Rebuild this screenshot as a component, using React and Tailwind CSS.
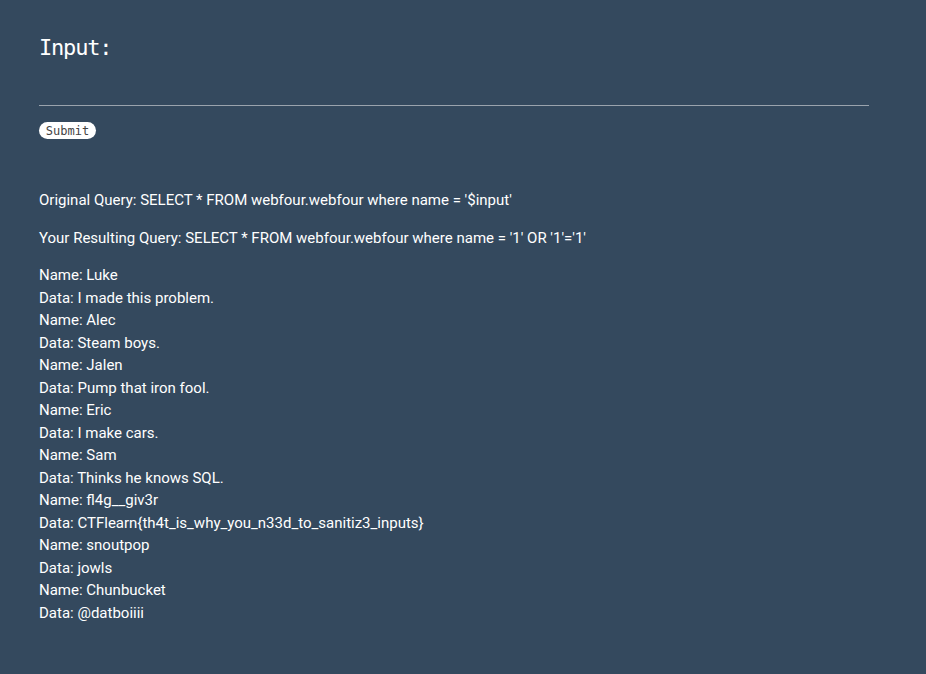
export default function App() {
  const rows = [
    ["Name", "Luke"], ["Data", "I made this problem."],
    ["Name", "Alec"], ["Data", "Steam boys."],
    ["Name", "Jalen"], ["Data", "Pump that iron fool."],
    ["Name", "Eric"], ["Data", "I make cars."],
    ["Name", "Sam"], ["Data", "Thinks he knows SQL."],
    ["Name", "fl4g__giv3r"], ["Data", "CTFlearn{th4t_is_why_you_n33d_to_sanitiz3_inputs}"],
    ["Name", "snoutpop"], ["Data", "jowls"],
    ["Name", "Chunbucket"], ["Data", "@datboiiii"],
  ];
  return (
    <div className="min-h-[674px] w-full bg-[#34495e] text-white pl-[39px] pr-[57px] pt-[34px]" style={{ fontFamily: "Roboto, sans-serif" }}>
      <div className="text-[22px] leading-[28px] tracking-[-1.2px] text-white" style={{ fontFamily: '"DejaVu Sans Mono", monospace' }}>Input:</div>
      <div className="mt-[43px] h-px bg-[#9aa3ad]" />
      <div className="mt-[16px] flex">
        <span className="flex h-[17px] w-[57px] items-center justify-center rounded-full bg-white text-[12px] text-[#444]" style={{ fontFamily: '"DejaVu Sans Mono", monospace' }}>Submit</span>
      </div>
      <div className="mt-[50px] text-[15px] leading-[22.5px]">
        <p>Original Query: SELECT * FROM webfour.webfour where name = '$input'</p>
        <p className="mt-[15px]">Your Resulting Query: SELECT * FROM webfour.webfour where name = '1' OR '1'='1'</p>
        <div className="mt-[15px]">
          {rows.map(([k, v], i) => (
            <div key={i}>{k}: {v}</div>
          ))}
        </div>
      </div>
    </div>
  );
}
